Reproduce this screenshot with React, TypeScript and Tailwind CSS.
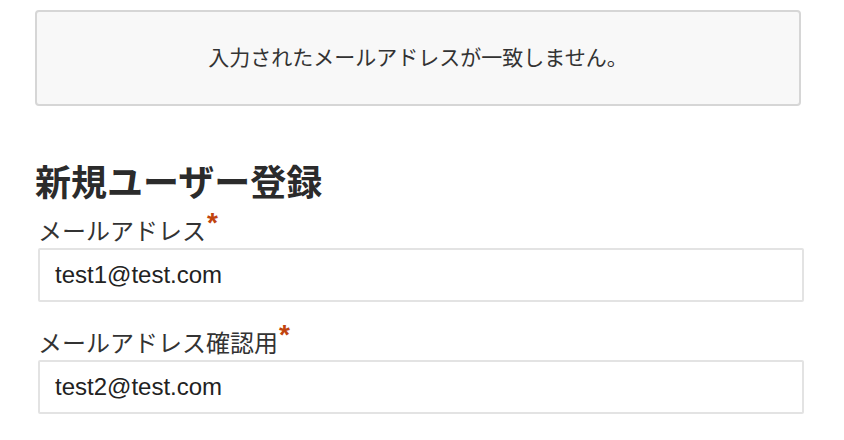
export default function App() {
  const font = { fontFamily: '"Liberation Sans", "Noto Sans CJK JP", sans-serif' };

  return (
    <div className="w-[844px] h-[440px] bg-white text-[#333] pl-[35px] overflow-hidden" style={font}>
      {/* エラー表示 */}
      <div className="mt-[10px] w-[766px] h-[96px] flex items-center justify-center rounded-[4px] border-2 border-[#d6d6d6] bg-[#f8f8f8] text-[21px]">
        入力されたメールアドレスが一致しません。
      </div>

      <h2 className="mt-[58px] h-[40px] leading-[40px] text-[36px] font-bold text-[#2b2b2b]">新規ユーザー登録</h2>

      <div className="pl-[3px] w-[769px]">
        <Field label="メールアドレス" value="test1@test.com" first />
        <Field label="メールアドレス確認用" value="test2@test.com" />
      </div>
    </div>
  );
}

function Field({ label, value, first }: { label: string; value: string; first?: boolean }) {
  return (
    <div className={first ? 'mt-[12px]' : 'mt-[26px]'}>
      <label className="block h-[32px] leading-[32px] text-[24px] text-[#333]">
        {label}
        <span className="text-[#c1440e] text-[28px] font-bold align-top leading-[14px] ml-[1px]">*</span>
      </label>
      <div className="h-[54px] w-[766px] flex items-center px-[15px] rounded-[2px] border-2 border-[#e3e3e3] bg-white text-[24px] text-[#222]">
        {value}
      </div>
    </div>
  );
}
